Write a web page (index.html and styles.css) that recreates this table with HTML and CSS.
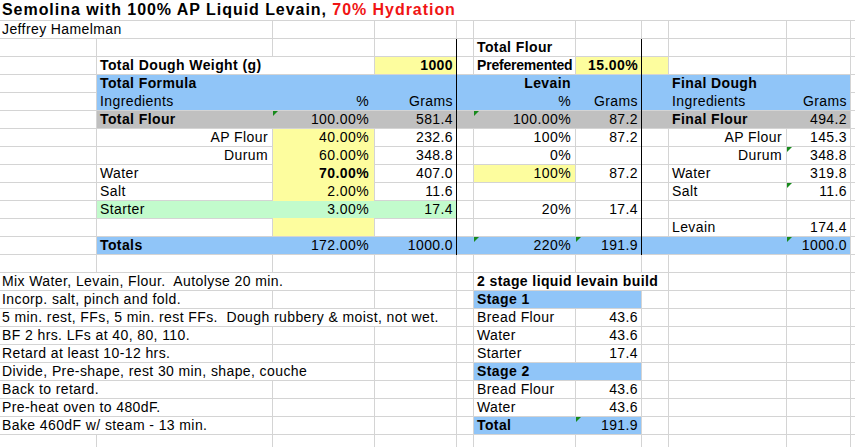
FILE: index.html
```html
<!DOCTYPE html>
<html>
<head>
<meta charset="utf-8">
<title>Semolina with 100% AP Liquid Levain</title>
<link rel="stylesheet" href="styles.css">
</head>
<body>
<div class="sheet">
  <!-- fills -->
  <div class="fill yellow cd y4"></div>
  <div class="fill yellow cg y4"></div>
  <div class="fill yellow ch y4"></div>
  <div class="fill blue bd hd"></div>
  <div class="fill blue eg hd"></div>
  <div class="fill blue hj hd"></div>
  <div class="fill gray bd y7"></div>
  <div class="fill gray eg y7"></div>
  <div class="fill gray hj y7"></div>
  <div class="fill yellow cc ys"></div>
  <div class="fill yellow cf y10"></div>
  <div class="fill green bd y12"></div>
  <div class="fill blue bd y14"></div>
  <div class="fill blue eg y14"></div>
  <div class="fill blue hj y14"></div>
  <div class="fill blue fg y17"></div>
  <div class="fill blue fg y21"></div>
  <div class="fill blue fg y24"></div>

  <!-- row 1-2 -->
  <div class="c title all y1 w">Semolina with 100% AP Liquid Levain, <span class="red">70% Hydration</span></div>
  <div class="c ab y2 w pa">Jeffrey Hamelman</div>

  <!-- row 3-4 -->
  <div class="c b cf y3">Total Flour</div>
  <div class="c b bc y4 w">Total Dough Weight (g)</div>
  <div class="c b r cd y4">1000</div>
  <div class="c b cf y4 tight">Preferemented</div>
  <div class="c b r cg y4">15.00%</div>

  <!-- row 5 -->
  <div class="c b cb y5">Total Formula</div>
  <div class="c b r cf y5 lev">Levain</div>
  <div class="c b ci y5">Final Dough</div>

  <!-- row 6 -->
  <div class="c cb y6">Ingredients</div>
  <div class="c r cc y6 pct">%</div>
  <div class="c r cd y6">Grams</div>
  <div class="c r cf y6">%</div>
  <div class="c r cg y6">Grams</div>
  <div class="c ci y6">Ingredients</div>
  <div class="c r cj y6">Grams</div>

  <!-- row 7 -->
  <div class="c b cb y7">Total Flour</div>
  <div class="c r cc y7 n">100.00%</div>
  <div class="c r cd y7">581.4</div>
  <div class="c r cf y7 n">100.00%</div>
  <div class="c r cg y7">87.2</div>
  <div class="c b ci y7">Final Flour</div>
  <div class="c r cj y7">494.2</div>

  <!-- row 8 -->
  <div class="c r cb y8">AP Flour</div>
  <div class="c r cc y8">40.00%</div>
  <div class="c r cd y8">232.6</div>
  <div class="c r cf y8">100%</div>
  <div class="c r cg y8">87.2</div>
  <div class="c r ci y8">AP Flour</div>
  <div class="c r cj y8">145.3</div>

  <!-- row 9 -->
  <div class="c r cb y9">Durum</div>
  <div class="c r cc y9">60.00%</div>
  <div class="c r cd y9">348.8</div>
  <div class="c r cf y9">0%</div>
  <div class="c r ci y9">Durum</div>
  <div class="c r cj y9 n">348.8</div>

  <!-- row 10 -->
  <div class="c cb y10">Water</div>
  <div class="c b r cc y10">70.00%</div>
  <div class="c r cd y10">407.0</div>
  <div class="c r cf y10">100%</div>
  <div class="c r cg y10">87.2</div>
  <div class="c ci y10">Water</div>
  <div class="c r cj y10">319.8</div>

  <!-- row 11 -->
  <div class="c cb y11">Salt</div>
  <div class="c r cc y11">2.00%</div>
  <div class="c r cd y11">11.6</div>
  <div class="c ci y11">Salt</div>
  <div class="c r cj y11 n">11.6</div>

  <!-- row 12 -->
  <div class="c cb y12">Starter</div>
  <div class="c r cc y12">3.00%</div>
  <div class="c r cd y12">17.4</div>
  <div class="c r cf y12">20%</div>
  <div class="c r cg y12">17.4</div>

  <!-- row 13 -->
  <div class="c ci y13">Levain</div>
  <div class="c r cj y13">174.4</div>

  <!-- row 14 -->
  <div class="c b cb y14">Totals</div>
  <div class="c r cc y14">172.00%</div>
  <div class="c r cd y14">1000.0</div>
  <div class="c r cf y14 n">220%</div>
  <div class="c r cg y14 n">191.9</div>
  <div class="c r cj y14 n">1000.0</div>

  <!-- notes and levain build -->
  <div class="c ac y16 w pa">Mix Water, Levain, Flour.  Autolyse 20 min.</div>
  <div class="c b fh y16 w">2 stage liquid levain build</div>

  <div class="c ab y17 w pa">Incorp. salt, pinch and fold.</div>
  <div class="c b cf y17">Stage 1</div>

  <div class="c ad y18 w pa">5 min. rest, FFs, 5 min. rest FFs.  Dough rubbery &amp; moist, not wet.</div>
  <div class="c cf y18">Bread Flour</div>
  <div class="c r cg y18">43.6</div>

  <div class="c ab y19 w pa">BF 2 hrs. LFs at 40, 80, 110.</div>
  <div class="c cf y19">Water</div>
  <div class="c r cg y19">43.6</div>

  <div class="c ab y20 w pa">Retard at least 10-12 hrs.</div>
  <div class="c cf y20">Starter</div>
  <div class="c r cg y20">17.4</div>

  <div class="c ac y21 w pa">Divide, Pre-shape, rest 30 min, shape, couche</div>
  <div class="c b cf y21">Stage 2</div>

  <div class="c ab y22 w pa">Back to retard.</div>
  <div class="c cf y22">Bread Flour</div>
  <div class="c r cg y22">43.6</div>

  <div class="c ab y23 w pa">Pre-heat oven to 480dF.</div>
  <div class="c cf y23">Water</div>
  <div class="c r cg y23">43.6</div>

  <div class="c ab y24 w pa">Bake 460dF w/ steam - 13 min.</div>
  <div class="c b cf y24">Total</div>
  <div class="c r cg y24 n">191.9</div>
</div>
</body>
</html>
```

FILE: styles.css
```css
html, body {
  margin: 0;
  padding: 0;
  overflow: hidden;
  background: #ffffff;
}

.sheet {
  --grid: #d4d4d4;
  --line: linear-gradient(var(--grid), var(--grid));
  display: grid;
  grid-template-columns: 96px 175px 101px 81px 16px 101px 65px 26px 117px 63px 1fr;
  grid-template-rows: 20px repeat(23, 17px) 12px;
  gap: 1px;
  width: 855px;
  height: 447px;
  overflow: hidden;
  font-family: "Liberation Sans", Arial, Helvetica, sans-serif;
  font-size: 14px;
  letter-spacing: 0.4px;
  color: #000;
  background:
    linear-gradient(#000, #000) 456px 39px / 1px 216px no-repeat,
    linear-gradient(#000, #000) 641px 39px / 1px 216px no-repeat,
    var(--line) 96px 0 / 1px 100% no-repeat,
    var(--line) 272px 0 / 1px 100% no-repeat,
    var(--line) 374px 0 / 1px 100% no-repeat,
    var(--line) 456px 0 / 1px 100% no-repeat,
    var(--line) 473px 0 / 1px 100% no-repeat,
    var(--line) 575px 0 / 1px 100% no-repeat,
    var(--line) 641px 0 / 1px 100% no-repeat,
    var(--line) 668px 0 / 1px 100% no-repeat,
    var(--line) 786px 0 / 1px 100% no-repeat,
    var(--line) 850px 0 / 1px 100% no-repeat,
    repeating-linear-gradient(to bottom, transparent 0 2px, var(--grid) 2px 3px, transparent 3px 18px),
    #ffffff;
}

/* fills */
.yellow { background: #fdfd9e; }
.blue   { background: #90c5f8; }
.gray   { background: #c0c0c0; }
.green  { background: #c2fbcc; }

/* cell text */
.c {
  position: relative;
  padding: 0 3px;
  line-height: 17px;
  white-space: pre;
  overflow: visible;
}
.w { background: #ffffff; }
.pa { padding-left: 2px; }
.b { font-weight: bold; }
.r { text-align: right; }
.cb.r, .ci.r { padding-right: 4px; }
.cc.r { padding-right: 5px; }
.cf.r { padding-right: 4px; }
.pct { padding-right: 7px; }
.lev { padding-right: 8px; }
.tight { letter-spacing: -0.2px; }

.title {
  font-size: 16px;
  letter-spacing: 0.95px;
  line-height: 20px;
  font-weight: bold;
  padding-left: 2px;
}
.red { color: #f01414; }

/* comment marker */
.n::before {
  content: "";
  position: absolute;
  top: 0;
  left: 0;
  border-style: solid;
  border-width: 5px 5px 0 0;
  border-color: #178a1c transparent transparent transparent;
}

/* columns */
.ca { grid-column: 1; }
.cb { grid-column: 2; }
.cc { grid-column: 3; }
.cd { grid-column: 4; }
.ce { grid-column: 5; }
.cf { grid-column: 6; }
.cg { grid-column: 7; }
.ch { grid-column: 8; }
.ci { grid-column: 9; }
.cj { grid-column: 10; }
.all { grid-column: 1 / -1; }
.ab { grid-column: 1 / 3; }
.ac { grid-column: 1 / 4; }
.ad { grid-column: 1 / 5; }
.bc { grid-column: 2 / 4; }
.bd { grid-column: 2 / 5; }
.eg { grid-column: 5 / 8; }
.hj { grid-column: 8 / 11; }
.fg { grid-column: 6 / 8; }
.fh { grid-column: 6 / 9; }

/* rows */
.y1 { grid-row: 1; }
.y2 { grid-row: 2; }
.y3 { grid-row: 3; }
.y4 { grid-row: 4; }
.y5 { grid-row: 5; }
.y6 { grid-row: 6; }
.hd { grid-row: 5 / 7; }
.y7 { grid-row: 7; }
.y8 { grid-row: 8; }
.ys { grid-row: 8 / 14; }
.y9 { grid-row: 9; }
.y10 { grid-row: 10; }
.y11 { grid-row: 11; }
.y12 { grid-row: 12; }
.y13 { grid-row: 13; }
.y14 { grid-row: 14; }
.y16 { grid-row: 16; }
.y17 { grid-row: 17; }
.y18 { grid-row: 18; }
.y19 { grid-row: 19; }
.y20 { grid-row: 20; }
.y21 { grid-row: 21; }
.y22 { grid-row: 22; }
.y23 { grid-row: 23; }
.y24 { grid-row: 24; }
```
